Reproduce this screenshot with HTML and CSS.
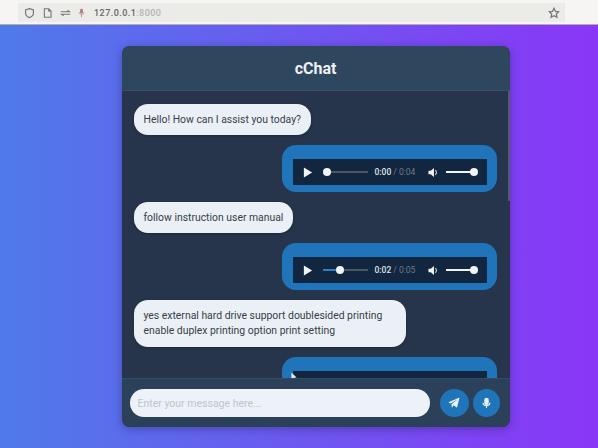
FILE: index.html
```html
<!DOCTYPE html>
<html lang="en">
<head>
    <meta charset="UTF-8">
    <meta name="viewport" content="width=device-width, initial-scale=1.0">
    <title>cChat</title>
    <link rel="stylesheet" href="styles.css">
</head>
<body>

    <div class="browser-bar">
        <div class="url-bar">
            <svg class="bar-icon" width="11" height="12" viewBox="0 0 14 14"><path d="M7 1.5 L12 3 V7 C12 10 9.5 12 7 13 C4.5 12 2 10 2 7 V3 Z" fill="none" stroke="#77777a" stroke-width="1.5"/></svg>
            <svg class="bar-icon" width="11" height="12" viewBox="0 0 14 14"><path d="M3 1.5 H8.5 L11.5 4.5 V12.5 H3 Z M8.5 1.5 V4.5 H11.5" fill="none" stroke="#77777a" stroke-width="1.4"/></svg>
            <svg class="bar-icon" width="11" height="12" viewBox="0 0 14 14"><path d="M1 5.5 H12 L9.5 3.5 M13 8.5 H2 L4.5 10.5" fill="none" stroke="#77777a" stroke-width="1.4"/></svg>
            <svg class="bar-icon" width="7" height="12" viewBox="0 0 10 14"><rect x="3" y="1" width="4" height="7" rx="2" fill="#b87a80"/><path d="M1.5 6 C1.5 10 8.5 10 8.5 6 M5 10 V13" fill="none" stroke="#a8898c" stroke-width="1.2"/></svg>
            <span class="url">127.0.0.1<span class="url-port">:8000</span></span>
            <svg class="bar-star" width="12" height="12" viewBox="0 0 14 14"><path d="M7 1.5 L8.7 5 L12.5 5.5 L9.7 8.2 L10.4 12 L7 10.2 L3.6 12 L4.3 8.2 L1.5 5.5 L5.3 5 Z" fill="none" stroke="#77777a" stroke-width="1.5"/></svg>
        </div>
    </div>

    <div class="stage">
        <div class="chat-card">
            <div class="chat-header">cChat</div>

            <div class="chat-messages">
                <div class="bubble">Hello! How can I assist you today?</div>

                <div class="audio-bubble">
                    <div class="player">
                        <svg class="play" width="10" height="11" viewBox="0 0 10 12"><path d="M0.5 0.5 L9.5 6 L0.5 11.5 Z" fill="#f1f3f5"/></svg>
                        <div class="track"><div class="track-fill fill-start"></div><div class="thumb"></div></div>
                        <span class="time">0:00 <span class="time-total">/ 0:04</span></span>
                        <svg class="speaker" width="11" height="11" viewBox="0 0 12 12"><path d="M0.5 4 H3 L6.5 1 V11 L3 8 H0.5 Z" fill="#f1f3f5"/><path d="M8 3.5 C9.5 5 9.5 7 8 8.5" fill="none" stroke="#c9ced4" stroke-width="1.2"/></svg>
                        <div class="volume"><div class="thumb"></div></div>
                    </div>
                </div>

                <div class="bubble">follow instruction user manual</div>

                <div class="audio-bubble">
                    <div class="player">
                        <svg class="play" width="10" height="11" viewBox="0 0 10 12"><path d="M0.5 0.5 L9.5 6 L0.5 11.5 Z" fill="#f1f3f5"/></svg>
                        <div class="track"><div class="track-fill fill-part"></div><div class="thumb"></div></div>
                        <span class="time">0:02 <span class="time-total">/ 0:05</span></span>
                        <svg class="speaker" width="11" height="11" viewBox="0 0 12 12"><path d="M0.5 4 H3 L6.5 1 V11 L3 8 H0.5 Z" fill="#f1f3f5"/><path d="M8 3.5 C9.5 5 9.5 7 8 8.5" fill="none" stroke="#c9ced4" stroke-width="1.2"/></svg>
                        <div class="volume"><div class="thumb"></div></div>
                    </div>
                </div>

                <div class="bubble bubble-wide">yes external hard drive support doublesided printing<br>enable duplex printing option print setting</div>

                <div class="audio-bubble">
                    <div class="player"></div>
                </div>

                <div class="scroll-thumb"></div>
                <svg class="cursor" width="6" height="9" viewBox="0 0 8 12"><path d="M0.5 0.5 V10 L3 8 L4.5 11 L6 10.3 L4.7 7.5 L7.5 7.3 Z" fill="#dfe6ee"/></svg>
            </div>

            <div class="chat-input">
                <input class="message-input" type="text" placeholder="Enter your message here...">
                <button class="round-btn">
                    <svg width="12" height="12" viewBox="0 0 14 14"><path d="M13.5 0.5 L10.5 12.5 L6.5 9.5 L4.5 12.5 L4 8.5 L11 3 L2.8 7.6 L0.5 6 Z" fill="#e9f0f6"/></svg>
                </button>
                <button class="round-btn">
                    <svg width="9" height="12" viewBox="0 0 12 15"><rect x="3" y="0.5" width="6" height="9.5" rx="3" fill="#e9f0f6"/><path d="M1.5 7 C1.5 12 10.5 12 10.5 7 M6 11 V14" fill="none" stroke="#e9f0f6" stroke-width="1.6"/></svg>
                </button>
            </div>
        </div>
    </div>

</body>
</html>
```

FILE: styles.css
```css
html, body {
    height: 100%;
}
body {
    margin: 0;
    display: flex;
    flex-direction: column;
    overflow: hidden;
    font-family: Roboto, "Liberation Sans", sans-serif;
    background: linear-gradient(90deg, #4f7aea 0%, #8a36f7 100%);
}
.browser-bar {
    height: 25px;
    flex-shrink: 0;
    padding: 3px 0 0 18px;
    box-sizing: border-box;
    background-color: #f6f5f3;
    border-bottom: 1px solid #b5acae;
    display: flex;
}
.url-bar {
    width: 547px;
    height: 19px;
    padding: 0 5px 0 6px;
    box-sizing: border-box;
    background-color: #ebebe7;
    display: flex;
    align-items: center;
    gap: 7px;
}
.bar-icon {
    flex-shrink: 0;
}
.url {
    margin-left: 2px;
    font-size: 9px;
    font-weight: 500;
    letter-spacing: 0.45px;
    color: #66666a;
}
.url-port {
    color: #b4b4b4;
}
.bar-star {
    margin-left: auto;
}
.stage {
    flex: 1;
    display: flex;
    align-items: center;
    justify-content: center;
    padding-left: 33px;
}
.chat-card {
    width: 388px;
    height: 381px;
    border-radius: 8px;
    background-color: #26354c;
    box-shadow: 0 2px 10px rgba(20, 20, 60, 0.35);
    overflow: hidden;
    display: flex;
    flex-direction: column;
}
.chat-header {
    height: 45px;
    flex-shrink: 0;
    box-sizing: border-box;
    background-color: #2f465f;
    border-bottom: 1px solid #38516c;
    color: #eef1f4;
    font-size: 16px;
    font-weight: 700;
    display: flex;
    align-items: center;
    justify-content: center;
}
.chat-messages {
    flex: 1;
    min-height: 0;
    position: relative;
    overflow: hidden;
    padding: 13px 13px 0 12px;
    display: flex;
    flex-direction: column;
    align-items: flex-start;
    gap: 10px;
}
.bubble {
    flex-shrink: 0;
    padding: 8px 10px;
    border-radius: 14px;
    background-color: #ebf0f6;
    color: #363e49;
    font-size: 10.4px;
    line-height: 15px;
    box-shadow: 0 1px 3px rgba(0, 0, 0, 0.25);
}
.bubble-wide {
    padding: 8px 24px 9px 10px;
}
.audio-bubble {
    flex-shrink: 0;
    align-self: flex-end;
    width: 215px;
    height: 47px;
    padding: 14px 10px 7px 11px;
    box-sizing: border-box;
    border-radius: 14px;
    background-color: #1f74ba;
}
.player {
    height: 26px;
    background-color: #12263f;
    display: flex;
    align-items: center;
    padding: 0 10px;
    box-sizing: border-box;
}
.play {
    flex-shrink: 0;
}
.track {
    position: relative;
    width: 45px;
    height: 2px;
    margin-left: 10px;
    background-color: #4c5866;
}
.track-fill {
    height: 100%;
    background-color: #2f7fc4;
}
.fill-start {
    width: 0;
}
.fill-part {
    width: 17px;
}
.thumb {
    position: absolute;
    top: -3px;
    width: 8px;
    height: 8px;
    border-radius: 50%;
    background-color: #f1f3f5;
}
.fill-start + .thumb {
    left: 0;
}
.fill-part + .thumb {
    left: 13px;
}
.time {
    margin-left: 7px;
    width: 43px;
    font-size: 8.5px;
    font-weight: 500;
    color: #dfe3e8;
    white-space: nowrap;
}
.time-total {
    color: #6f7b89;
    font-weight: 400;
}
.speaker {
    margin-left: 10px;
    flex-shrink: 0;
}
.volume {
    position: relative;
    width: 31px;
    height: 2px;
    margin-left: 7px;
    background-color: #f1f3f5;
}
.volume .thumb {
    right: -1px;
}
.scroll-thumb {
    position: absolute;
    top: 0;
    right: 0;
    width: 2px;
    height: 110px;
    background-color: #4d5c74;
}
.cursor {
    position: absolute;
    left: 169px;
    top: 281px;
}
.chat-input {
    height: 49px;
    flex-shrink: 0;
    box-sizing: border-box;
    background-color: #2b4059;
    border-top: 1px solid #334b66;
    padding: 0 9px 0 8px;
    display: flex;
    align-items: center;
}
.message-input {
    width: 300px;
    height: 28px;
    padding: 0 8px;
    box-sizing: border-box;
    border: none;
    border-radius: 14px;
    background-color: #ecf2f8;
    font-family: Roboto, "Liberation Sans", sans-serif;
    font-size: 10.5px;
    margin-right: 10px;
}
.message-input::placeholder {
    color: #bfc5cd;
}
.round-btn {
    width: 29px;
    height: 28px;
    padding: 0;
    border: none;
    border-radius: 50%;
    background-color: #1f74ba;
    display: flex;
    align-items: center;
    justify-content: center;
    margin-right: 4px;
    flex-shrink: 0;
}
.round-btn:last-child {
    width: 27px;
    margin-right: 0;
}
```
